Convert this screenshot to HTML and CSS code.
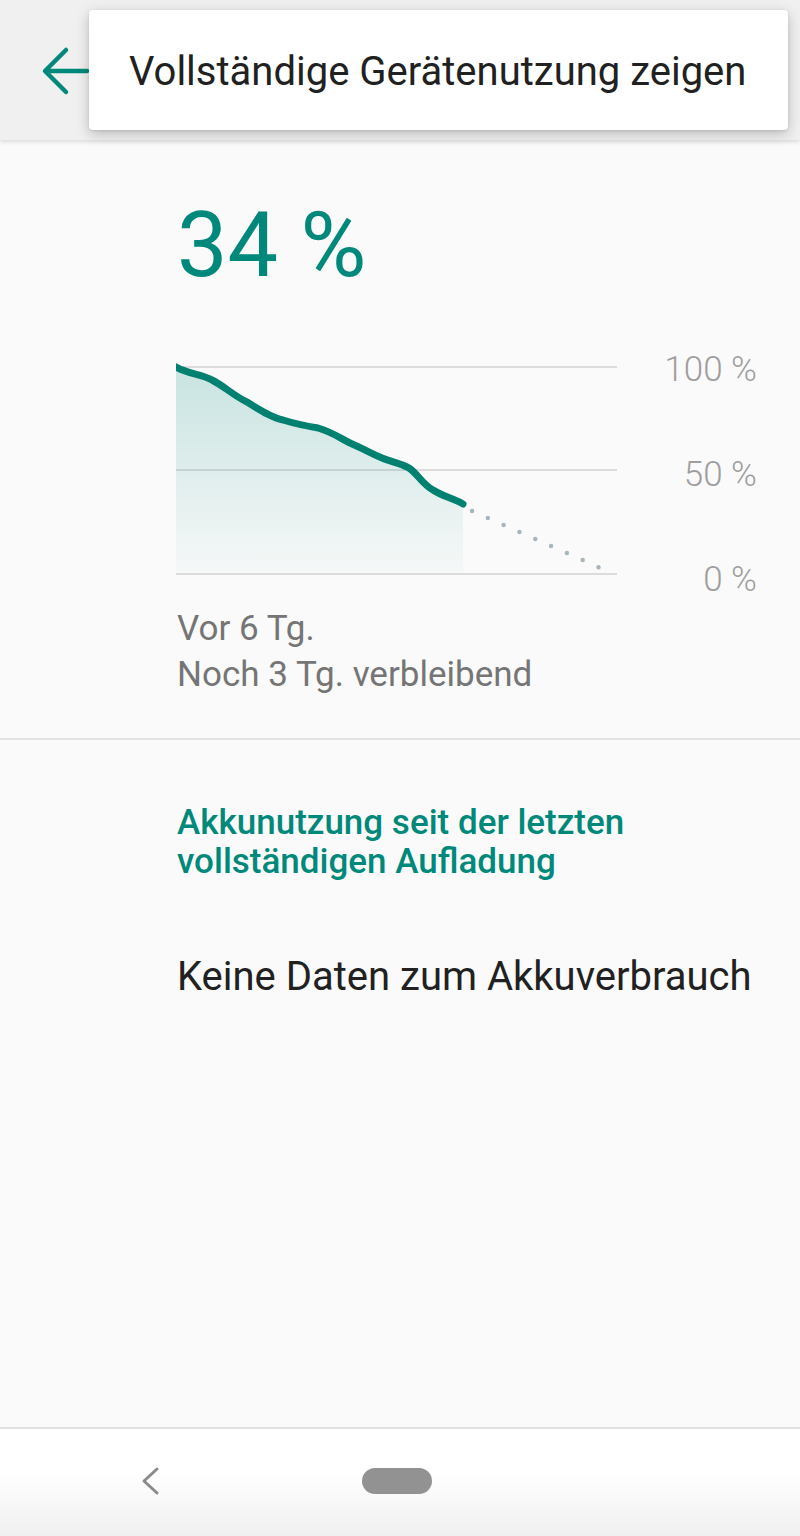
FILE: index.html
```html
<!DOCTYPE html>
<html lang="de">

<head>
    <meta charset="UTF-8">
    <meta name="viewport" content="width=device-width, initial-scale=1.0">
    <title>Akku</title>
    <link rel="stylesheet" href="styles.css">
</head>

<body>

    <header class="appbar">
        <svg class="back-arrow" viewBox="0 0 50 50" width="50" height="50">
            <path d="M46 25H5M25 4L4 25l21 21" fill="none" stroke="#00897b" stroke-width="4.5" stroke-linecap="round" stroke-linejoin="round"/>
        </svg>

        <!-- overflow menu, open -->
        <div class="popup-menu">
            <span class="menu-item">Vollständige Gerätenutzung zeigen</span>
        </div>
    </header>

    <main class="content">
        <section class="summary">
            <div class="big-percent">34 %</div>

            <div class="chart">
                <svg class="chart-graph" width="441" height="220" viewBox="0 0 441 220">
                    <defs>
                        <linearGradient id="fillGrad" x1="0" y1="0" x2="0" y2="1">
                            <stop offset="0" stop-color="#00897b" stop-opacity="0.2"/>
                            <stop offset="1" stop-color="#00897b" stop-opacity="0.02"/>
                        </linearGradient>
                    </defs>
                    <line x1="0" y1="7" x2="441" y2="7" class="grid-line"/>
                    <line x1="0" y1="110" x2="441" y2="110" class="grid-line"/>
                    <line x1="0" y1="214" x2="441" y2="214" class="grid-line"/>
                    <path d="M0 7 C 12 14, 26 14, 36 20 C 48 26, 58 36, 71 42 C 84 50, 96 58, 107 60 C 120 64, 130 66, 142 68 C 156 72, 164 78, 174 83 C 186 88, 196 94, 206 98 C 216 102, 226 104, 233 108 C 242 114, 246 124, 257 130 C 266 136, 276 138, 287 144 L 287 212 L 0 212 Z" fill="url(#fillGrad)"/>
                    <path d="M0 7 C 12 14, 26 14, 36 20 C 48 26, 58 36, 71 42 C 84 50, 96 58, 107 60 C 120 64, 130 66, 142 68 C 156 72, 164 78, 174 83 C 186 88, 196 94, 206 98 C 216 102, 226 104, 233 108 C 242 114, 246 124, 257 130 C 266 136, 276 138, 287 144" class="level-line"/>
                    <line x1="296" y1="151" x2="438" y2="214" class="prediction"/>
                </svg>
                <div class="chart-labels">
                    <span>100 %</span>
                    <span>50 %</span>
                    <span>0 %</span>
                </div>
            </div>

            <div class="chart-info">
                <div>Vor 6 Tg.</div>
                <div>Noch 3 Tg. verbleibend</div>
            </div>
        </section>

        <section class="usage">
            <h2 class="usage-title">Akkunutzung seit der letzten vollständigen Aufladung</h2>
            <p class="usage-empty">Keine Daten zum Akkuverbrauch</p>
        </section>
    </main>

    <nav class="navbar">
        <svg class="nav-back" width="24" height="32" viewBox="0 0 24 32">
            <polyline points="18,4 5,16 18,28" fill="none" stroke="#8a8a8a" stroke-width="3" stroke-linecap="round" stroke-linejoin="round"/>
        </svg>
        <div class="nav-home"></div>
    </nav>

</body>

</html>
```

FILE: styles.css
```css
body {
    font-family: Roboto, 'Noto Sans', sans-serif;
    background-color: #fafafa;
    margin: 0;
    height: 1536px;
    display: flex;
    flex-direction: column;
    overflow: hidden;
}

.appbar {
    position: relative;
    height: 140px;
    flex-shrink: 0;
    background-color: #f0f0f0;
    box-shadow: 0 2px 4px rgba(0, 0, 0, 0.12);
    z-index: 2;
}

.back-arrow {
    position: absolute;
    left: 41px;
    top: 46px;
}

.popup-menu {
    position: absolute;
    left: 89px;
    top: 10px;
    width: 699px;
    height: 120px;
    background-color: #ffffff;
    border-radius: 4px;
    box-shadow: 0 4px 14px rgba(0, 0, 0, 0.22), 0 1px 3px rgba(0, 0, 0, 0.1);
    display: flex;
    align-items: center;
    padding-left: 40px;
    padding-top: 3px;
    box-sizing: border-box;
}

.menu-item {
    font-size: 40px;
    color: #212121;
}

.content {
    flex: 1;
}

.summary {
    padding: 56px 0 40px 176px;
    border-bottom: 2px solid #e2e2e2;
}

.big-percent {
    font-size: 90px;
    line-height: 100px;
    color: #00897b;
    padding-left: 1px;
}

.chart {
    display: flex;
    margin-top: 64px;
}

.grid-line {
    stroke: #dcdcdc;
    stroke-width: 2;
}

.level-line {
    fill: none;
    stroke: #00806f;
    stroke-width: 7;
    stroke-linecap: round;
    stroke-linejoin: round;
}

.prediction {
    stroke: #a9b5bd;
    stroke-width: 4.5;
    stroke-linecap: round;
    stroke-dasharray: 0 17.3;
}

.chart-labels {
    flex: 1;
    display: flex;
    flex-direction: column;
    align-items: flex-end;
    gap: 69px;
    margin-top: -8px;
    padding-right: 43px;
    font-size: 35px;
    font-weight: 300;
    line-height: 36px;
    color: #9e9e9e;
}

.chart-info {
    margin-top: 8px;
    font-size: 35px;
    line-height: 46px;
    color: #757575;
    padding-left: 1px;
}

.usage {
    padding: 63px 40px 0 177px;
}

.usage-title {
    margin: 0;
    font-size: 35px;
    font-weight: 500;
    line-height: 39px;
    color: #00897b;
    max-width: 520px;
}

.usage-empty {
    margin: 72px 0 0;
    font-size: 40px;
    line-height: 48px;
    color: #212121;
}

.navbar {
    height: 109px;
    flex-shrink: 0;
    border-top: 2px solid #e0e0e0;
    background: linear-gradient(#ffffff 40%, #f0f0f0);
    display: flex;
    align-items: center;
    padding-left: 139px;
    padding-bottom: 4px;
    box-sizing: border-box;
}

.nav-back {
    display: block;
}

.nav-home {
    width: 70px;
    height: 26px;
    border-radius: 13px;
    background-color: #929292;
    margin-left: 199px;
}
```
